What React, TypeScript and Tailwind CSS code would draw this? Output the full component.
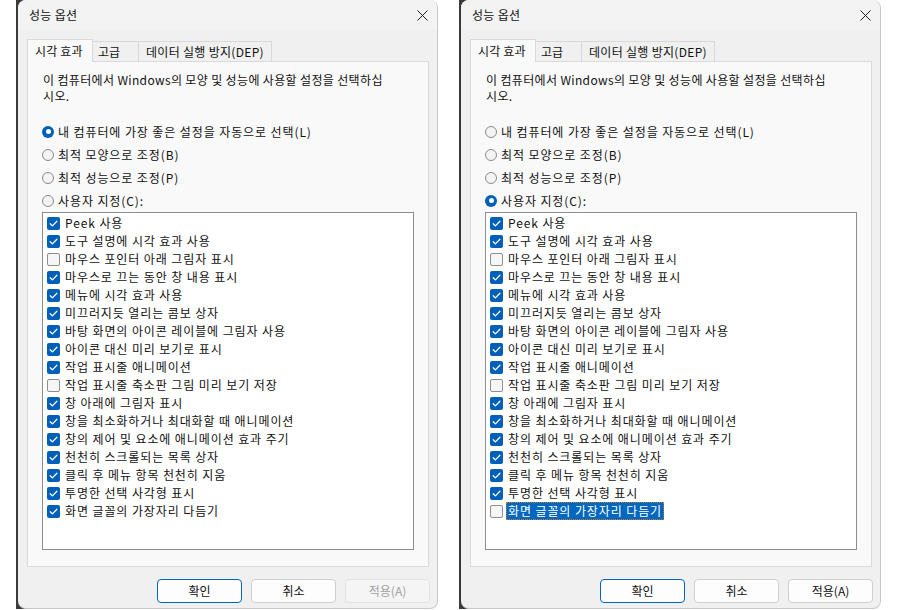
import React from "react";

const ITEMS: string[] = [
  "Peek 사용",
  "도구 설명에 시각 효과 사용",
  "마우스 포인터 아래 그림자 표시",
  "마우스로 끄는 동안 창 내용 표시",
  "메뉴에 시각 효과 사용",
  "미끄러지듯 열리는 콤보 상자",
  "바탕 화면의 아이콘 레이블에 그림자 사용",
  "아이콘 대신 미리 보기로 표시",
  "작업 표시줄 애니메이션",
  "작업 표시줄 축소판 그림 미리 보기 저장",
  "창 아래에 그림자 표시",
  "창을 최소화하거나 최대화할 때 애니메이션",
  "창의 제어 및 요소에 애니메이션 효과 주기",
  "천천히 스크롤되는 목록 상자",
  "클릭 후 메뉴 항목 천천히 지움",
  "투명한 선택 사각형 표시",
  "화면 글꼴의 가장자리 다듬기",
];

const RADIOS = [
  "내 컴퓨터에 가장 좋은 설정을 자동으로 선택(L)",
  "최적 모양으로 조정(B)",
  "최적 성능으로 조정(P)",
  "사용자 지정(C):",
];

function CheckBox({ checked }: { checked: boolean }) {
  if (checked) {
    return (
      <span className="flex h-[13px] w-[13px] shrink-0 items-center justify-center rounded-[2px] bg-[#005fb8]">
        <svg width="13" height="13" viewBox="0 0 13 13">
          <path d="M3.2 6.7 L5.4 8.9 L9.9 4.3" fill="none" stroke="#ffffff" strokeWidth="1.3" strokeLinecap="round" strokeLinejoin="round" />
        </svg>
      </span>
    );
  }
  return <span className="h-[13px] w-[13px] shrink-0 rounded-[2px] border border-[#8e8e8e] bg-[#f6f6f6]" />;
}

function Radio({ on }: { on: boolean }) {
  if (on) {
    return (
      <span className="flex h-[12px] w-[12px] shrink-0 items-center justify-center rounded-full bg-[#005fb8]">
        <span className="h-[5px] w-[5px] rounded-full bg-white" />
      </span>
    );
  }
  return <span className="h-[12px] w-[12px] shrink-0 rounded-full border border-[#8a8a8a] bg-[#f4f4f4]" />;
}

function Dialog({ custom }: { custom: boolean }) {
  const checks = ITEMS.map((_, i) => {
    if (i === 2 || i === 9) return false;
    if (i === 16 && custom) return false;
    return true;
  });
  const radioIndex = custom ? 3 : 0;
  return (
    <div className="h-[609px] pl-[2px] bg-[linear-gradient(90deg,#3a3a3a_12px,transparent_12px)]">
      <div className="flex h-full w-[420px] flex-col rounded-lg border-r border-b border-[#c8c8c8] bg-[#f0f0f0] text-[12px] text-[#111]">
        {/* title bar */}
        <div className="flex h-[30px] shrink-0 items-center justify-between rounded-t-lg bg-[#f3f3f3] pl-[11px] pr-[9px]">
          <span className="leading-none tracking-[0.3px]">성능 옵션</span>
          <svg width="11" height="11" viewBox="0 0 11 11">
            <path d="M0.5 0.5 L10.5 10.5 M10.5 0.5 L0.5 10.5" stroke="#1b1b1b" strokeWidth="1" />
          </svg>
        </div>
        {/* tabs */}
        <div className="ml-[9px] mt-[9px] flex h-[22px] items-end">
          <div className="relative top-px z-10 flex h-[23px] w-[66px] items-center border border-b-0 border-[#d9d9d9] bg-[#f9f9f9] pl-[7px] tracking-[0.2px]">
            시각 효과
          </div>
          <div className="flex h-[20px] w-[46px] items-center border-t border-r border-[#d9d9d9] bg-[#f0f0f0] pl-[5px]">
            고급
          </div>
          <div className="flex h-[20px] w-[133px] items-center border-t border-r border-[#d9d9d9] bg-[#f0f0f0] pl-[7px] tracking-[0.3px]">
            데이터 실행 방지(DEP)
          </div>
        </div>
        {/* panel */}
        <div className="ml-[9px] mr-[8px] flex h-[506px] flex-col border border-[#dadada] bg-[#f9f9f9] px-[14px] pt-[10px]">
          <p className="whitespace-nowrap pl-px leading-[16px] tracking-[0.35px]">
            이 컴퓨터에서 Windows의 모양 및 성능에 사용할 설정을 선택하십
            <br />
            시오.
          </p>
          <div className="mt-[16px] flex flex-col">
            {RADIOS.map((r, i) => (
              <div key={r} className="flex h-[23px] items-center gap-[4px]">
                <Radio on={i === radioIndex} />
                <span className="leading-none tracking-[0.9px]">{r}</span>
              </div>
            ))}
          </div>
          <div className="flex h-[338px] flex-col border border-[#8d8d8d] bg-white pl-[4px] pt-[1px]">
            {ITEMS.map((t, i) => {
              const sel = custom && i === 16;
              return (
                <div key={t} className="flex h-[18px] items-center">
                  <CheckBox checked={checks[i]} />
                  {sel ? (
                    <span className="ml-[3px] flex h-[18px] items-center border border-dotted border-[#c27a2a] bg-[#0067c0] px-[1px] tracking-[0.9px] text-white">
                      {t}
                    </span>
                  ) : (
                    <span className="ml-[3px] px-[2px] leading-none tracking-[0.9px]">{t}</span>
                  )}
                </div>
              );
            })}
          </div>
        </div>
        {/* buttons */}
        <div className="mt-[12px] flex justify-end gap-[9px] pr-[7px]">
          <button className="flex h-[24px] w-[85px] items-center justify-center rounded-[4px] border border-[#0067c0] bg-[#fdfdfd] text-[12px]">
            확인
          </button>
          <button className="flex h-[24px] w-[85px] items-center justify-center rounded-[4px] border border-[#cfcfcf] bg-[#fdfdfd] text-[12px]">
            취소
          </button>
          {custom ? (
            <button className="flex h-[24px] w-[85px] items-center justify-center rounded-[4px] border border-[#cfcfcf] bg-[#fdfdfd] text-[12px]">
              적용(A)
            </button>
          ) : (
            <button className="flex h-[24px] w-[85px] items-center justify-center rounded-[4px] border border-[#e3e3e3] bg-[#f5f5f5] text-[12px] text-[#a0a0a0]">
              적용(A)
            </button>
          )}
        </div>
      </div>
    </div>
  );
}

export default function App() {
  return (
    <div className="flex h-[610px] w-[900px] gap-[21px] overflow-hidden bg-white pl-[16px] font-['Noto_Sans_CJK_KR','Noto_Sans',sans-serif]">
      <Dialog custom={false} />
      <Dialog custom={true} />
    </div>
  );
}
